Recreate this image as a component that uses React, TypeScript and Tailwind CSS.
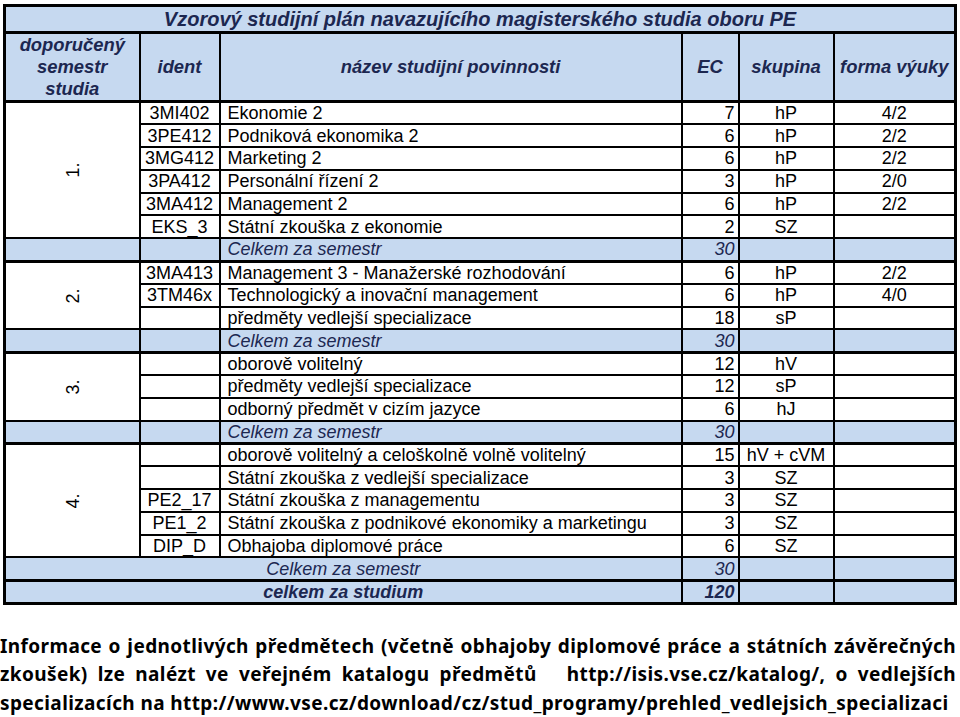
import React from 'react';

type Row = { ident?: string; name: string; ec: string; group?: string; form?: string };

const semesters: { label: string; rows: Row[] }[] = [
  {
    label: '1.',
    rows: [
      { ident: '3MI402', name: 'Ekonomie 2', ec: '7', group: 'hP', form: '4/2' },
      { ident: '3PE412', name: 'Podniková ekonomika 2', ec: '6', group: 'hP', form: '2/2' },
      { ident: '3MG412', name: 'Marketing 2', ec: '6', group: 'hP', form: '2/2' },
      { ident: '3PA412', name: 'Personální řízení 2', ec: '3', group: 'hP', form: '2/0' },
      { ident: '3MA412', name: 'Management 2', ec: '6', group: 'hP', form: '2/2' },
      { ident: 'EKS_3', name: 'Státní zkouška z ekonomie', ec: '2', group: 'SZ' },
    ],
  },
  {
    label: '2.',
    rows: [
      { ident: '3MA413', name: 'Management 3 - Manažerské rozhodování', ec: '6', group: 'hP', form: '2/2' },
      { ident: '3TM46x', name: 'Technologický a inovační management', ec: '6', group: 'hP', form: '4/0' },
      { name: 'předměty vedlejší specializace', ec: '18', group: 'sP' },
    ],
  },
  {
    label: '3.',
    rows: [
      { name: 'oborově volitelný', ec: '12', group: 'hV' },
      { name: 'předměty vedlejší specializace', ec: '12', group: 'sP' },
      { name: 'odborný předmět v cizím jazyce', ec: '6', group: 'hJ' },
    ],
  },
];

const lastSemester: Row[] = [
  { name: 'oborově volitelný a celoškolně volně volitelný', ec: '15', group: 'hV + cVM' },
  { name: 'Státní zkouška z vedlejší specializace', ec: '3', group: 'SZ' },
  { ident: 'PE2_17', name: 'Státní zkouška z managementu', ec: '3', group: 'SZ' },
  { ident: 'PE1_2', name: 'Státní zkouška z podnikové ekonomiky a marketingu', ec: '3', group: 'SZ' },
  { ident: 'DIP_D', name: 'Obhajoba diplomové práce', ec: '6', group: 'SZ' },
];

const td = 'border-2 border-black h-[22.8px] p-0 leading-none whitespace-nowrap';
const blue = 'bg-[#c6d9f0]';
const navy = 'text-[#1c2750]';

function SemesterLabel({ label, span }: { label: string; span: number }) {
  return (
    <td rowSpan={span} className={`${td} text-center align-middle`}>
      <span className="inline-block -rotate-90">{label}</span>
    </td>
  );
}

function DataRow({ row, first }: { row: Row; first?: React.ReactNode }) {
  return (
    <tr>
      {first}
      <td className={`${td} text-center`}>{row.ident}</td>
      <td className={`${td} pl-[7px]`}>{row.name}</td>
      <td className={`${td} text-right pr-[3px]`}>{row.ec}</td>
      <td className={`${td} text-center`}>{row.group}</td>
      <td className={`${td} text-center`}>{row.form}</td>
    </tr>
  );
}

function TotalRow() {
  return (
    <tr className={`${blue} ${navy} italic`}>
      <td className={`${td} border-b-[3px]`} />
      <td className={`${td} border-b-[3px]`} />
      <td className={`${td} border-b-[3px] pl-[7px]`}>Celkem za semestr</td>
      <td className={`${td} border-b-[3px] text-right pr-[3px]`}>30</td>
      <td className={`${td} border-b-[3px]`} />
      <td className={`${td} border-b-[3px]`} />
    </tr>
  );
}

export default function App() {
  return (
    <div className="w-[960px] h-[717px] bg-white overflow-hidden font-['Liberation_Sans',Arial,sans-serif] text-black">
      <table className="ml-[3px] mt-[4px] w-[954px] border-collapse border-[3px] border-black table-fixed font-['Liberation_Sans',Arial,sans-serif] text-[18px] text-black">
        <colgroup>
          <col className="w-[135px]" />
          <col className="w-[80px]" />
          <col className="w-[462px]" />
          <col className="w-[57px]" />
          <col className="w-[95px]" />
          <col />
        </colgroup>
        <thead>
          <tr className={`${blue} ${navy} font-bold italic text-[20px]`}>
            <td colSpan={6} className="border-b-[3px] border-black h-[27px] text-center p-0 leading-none">
              Vzorový studijní plán navazujícího magisterského studia oboru PE
            </td>
          </tr>
          <tr className={`${blue} ${navy} font-bold italic text-[18.4px]`}>
            <td className="border-2 border-b-[3px] border-black h-[69px] text-center p-0 leading-[22px]">
              doporučený
              <br />
              semestr
              <br />
              studia
            </td>
            <td className="border-2 border-b-[3px] border-black text-center p-0">ident</td>
            <td className="border-2 border-b-[3px] border-black text-center p-0">název studijní povinnosti</td>
            <td className="border-2 border-b-[3px] border-black text-center p-0">EC</td>
            <td className="border-2 border-b-[3px] border-black text-center p-0">skupina</td>
            <td className="border-2 border-b-[3px] border-black text-center p-0">forma výuky</td>
          </tr>
        </thead>
        <tbody>
          {semesters.map((s) => (
            <React.Fragment key={s.label}>
              {s.rows.map((r, i) => (
                <DataRow
                  key={i}
                  row={r}
                  first={i === 0 ? <SemesterLabel label={s.label} span={s.rows.length} /> : undefined}
                />
              ))}
              <TotalRow />
            </React.Fragment>
          ))}
          {lastSemester.map((r, i) => (
            <DataRow
              key={i}
              row={r}
              first={i === 0 ? <SemesterLabel label="4." span={lastSemester.length} /> : undefined}
            />
          ))}
          <tr className={`${blue} ${navy} italic`}>
            <td colSpan={3} className={`${td} border-b-[3px] text-center`}>Celkem za semestr</td>
            <td className={`${td} border-b-[3px] text-right pr-[3px]`}>30</td>
            <td className={`${td} border-b-[3px]`} />
            <td className={`${td} border-b-[3px]`} />
          </tr>
          <tr className={`${blue} ${navy} italic font-bold`}>
            <td colSpan={3} className={`${td} text-center`}>celkem za studium</td>
            <td className={`${td} text-right pr-[3px]`}>120</td>
            <td className={td} />
            <td className={td} />
          </tr>
        </tbody>
      </table>

      <div className="mt-[27px] w-[956px] font-['Noto_Sans',sans-serif] font-bold text-[19px] tracking-[0.4px] leading-[28.5px] text-black">
        <div className="text-justify [text-align-last:justify]">
          Informace o jednotlivých předmětech (včetně obhajoby diplomové práce a státních závěrečných
        </div>
        <div className="text-justify [text-align-last:justify]">
          zkoušek) lze nalézt ve veřejném katalogu předmětů&nbsp;&nbsp; http://isis.vse.cz/katalog/, o vedlejších
        </div>
        <div className="whitespace-nowrap">
          specializacích na http://www.vse.cz/download/cz/stud_programy/prehled_vedlejsich_specializaci
        </div>
      </div>
    </div>
  );
}
